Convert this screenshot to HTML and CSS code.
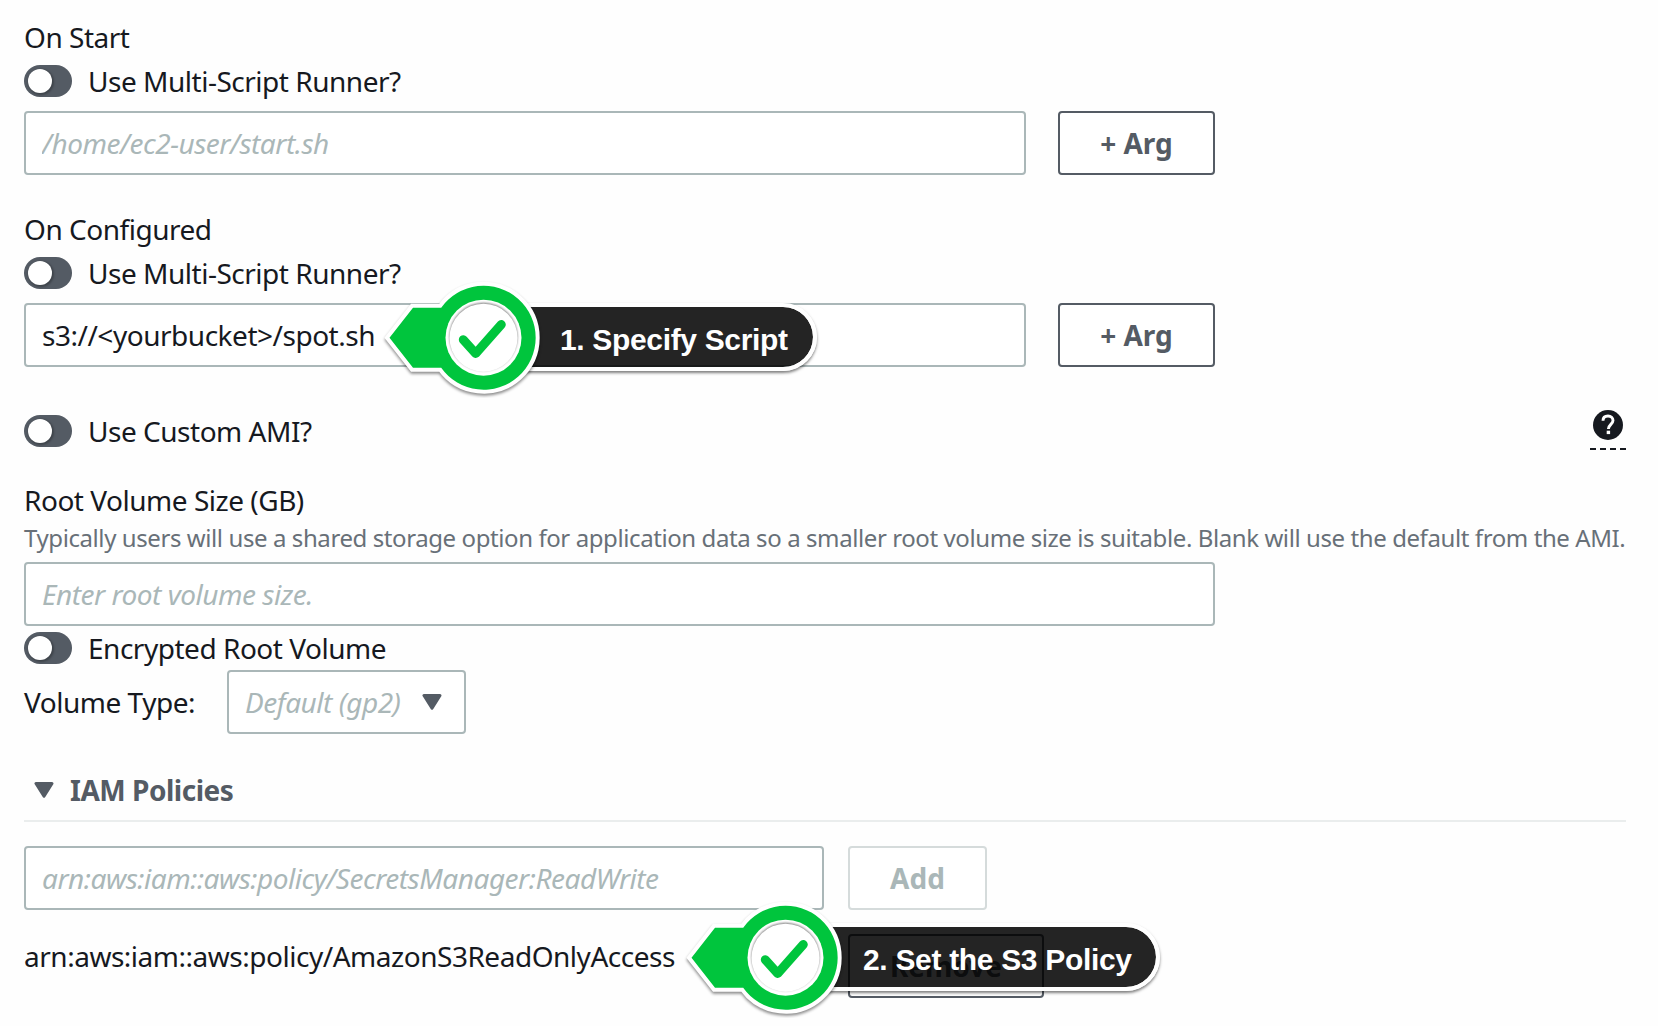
FILE: index.html
```html
<!DOCTYPE html>
<html lang="en">
<head>
<meta charset="utf-8">
<title>Cluster configuration</title>
<link rel="stylesheet" href="styles.css">
</head>
<body>
<main class="form">
  <section class="script">
    <div class="label">On Start</div>
    <label class="switch-row"><span class="switch"><span class="knob"></span></span>Use Multi-Script Runner?</label>
    <div class="script-fields">
      <input class="input" type="text" placeholder="/home/ec2-user/start.sh">
      <button class="button" type="button">+ Arg</button>
    </div>
  </section>

  <section class="script">
    <div class="label">On Configured</div>
    <label class="switch-row"><span class="switch"><span class="knob"></span></span>Use Multi-Script Runner?</label>
    <div class="script-fields">
      <input class="input" type="text" value="s3://&lt;yourbucket&gt;/spot.sh">
      <button class="button" type="button">+ Arg</button>
    </div>
  </section>

  <section class="ami">
    <label class="switch-row"><span class="switch"><span class="knob"></span></span>Use Custom AMI?</label>
    <svg class="help" width="36" height="44" viewBox="0 0 36 44">
      <circle cx="18" cy="17" r="15" fill="#16191f"/>
      <path d="M13 12.8C13 9.8 15 8 18 8s5 1.900 5 4.600c0 3.500-4.600 4.200-4.600 8.400" fill="none" stroke="#fff" stroke-width="2.900"/>
      <rect x="16.700" y="22.700" width="3.400" height="3.400" fill="#fff"/>
      <path d="M0 41H36" stroke="#16191f" stroke-width="2" stroke-dasharray="6 4"/>
    </svg>
  </section>

  <section class="volume">
    <div class="label label-tight">Root Volume Size (GB)</div>
    <div class="hint">Typically users will use a shared storage option for application data so a smaller root volume size is suitable. Blank will use the default from the AMI.</div>
    <input class="input volume-size" type="text" placeholder="Enter root volume size.">
    <label class="switch-row"><span class="switch"><span class="knob"></span></span>Encrypted Root Volume</label>
    <div class="volume-type">
      <span>Volume Type:</span>
      <div class="select">
        <span>Default (gp2)</span>
        <svg class="caret" width="20" height="16" viewBox="0 0 20 16"><path d="M2 1.500H18L10 14.300Z"/></svg>
      </div>
    </div>
  </section>

  <section class="policies">
    <h2 class="policies-title">
      <svg class="caret" width="20" height="16" viewBox="0 0 20 16"><path d="M2 1.500H18L10 14.300Z"/></svg>
      <span>IAM Policies</span>
    </h2>
    <div class="policy-row">
      <input class="input" type="text" placeholder="arn:aws:iam::aws:policy/SecretsManager:ReadWrite">
      <button class="button button-add" type="button" disabled>Add</button>
    </div>
    <div class="policy-row">
      <div class="policy-name">arn:aws:iam::aws:policy/AmazonS3ReadOnlyAccess</div>
      <button class="button button-remove" type="button">Remove</button>
    </div>
  </section>
</main>

<div class="callout callout-script">
  <div class="pill"></div>
  <svg class="marker" width="440" height="120" viewBox="0 0 440 120">
    <g class="badge">
      <path d="M9.500 59.700L33 29.700H61.200A52 52 0 1 1 61.200 89.700H33Z"/>
    </g>
    <circle cx="103.500" cy="59.700" r="38" fill="#fff"/>
    <circle class="rim" cx="103.500" cy="59.700" r="34"/>
    <path class="check" d="M83.300 61.700L95.700 75.500L121.300 46.500"/>
    <text class="callout-text" x="180" y="72" textLength="228">1. Specify Script</text>
  </svg>
</div>

<div class="callout callout-policy">
  <div class="pill"></div>
  <svg class="marker" width="490" height="120" viewBox="0 0 490 120">
    <g class="badge">
      <path d="M9.500 59.700L33 29.700H61.200A52 52 0 1 1 61.200 89.700H33Z"/>
    </g>
    <circle cx="103.500" cy="59.700" r="38" fill="#fff"/>
    <circle class="rim" cx="103.500" cy="59.700" r="34"/>
    <path class="check" d="M83.300 61.700L95.700 75.500L121.300 46.500"/>
    <text class="callout-text" x="181" y="72" textLength="269">2. Set the S3 Policy</text>
  </svg>
</div>
</body>
</html>
```
FILE: styles.css
```css
* {
  box-sizing: border-box;
}

body {
  margin: 0;
  background: #fefefe;
  color: #16191f;
  font: 28px/44px "Noto Sans", sans-serif;
  letter-spacing: -.48px;
}

.form {
  width: 1626px;
  padding: 15px 0 0 24px;
}

.script {
  margin-bottom: 32px;
}

.label-tight {
  line-height: 40px;
}

.switch-row {
  display: flex;
  align-items: center;
  gap: 16px;
  height: 44px;
}

.switch {
  width: 48px;
  height: 32px;
  padding: 4px;
  border-radius: 16px;
  background: #545b64;
}

.knob {
  display: block;
  width: 24px;
  height: 24px;
  border-radius: 50%;
  background: #fff;
  box-shadow: 1px 1px 2px 1px rgba(0, 0, 0, .25);
}

.input {
  display: block;
  height: 64px;
  padding: 0 16px;
  border: 2px solid #aab7b8;
  border-radius: 4px;
  background: #fff;
  color: #16191f;
  font: inherit;
  letter-spacing: inherit;
}

.input::placeholder {
  color: #aab7b8;
  font-style: italic;
  opacity: 1;
}

.button {
  height: 64px;
  padding: 0;
  border: 2px solid #545b64;
  border-radius: 4px;
  background: #fff;
  color: #545b64;
  font: bold 28px/44px "Noto Sans", sans-serif;
}

.script-fields {
  display: grid;
  grid-template-columns: 1002px 157px;
  gap: 32px;
  margin-top: 8px;
}

.ami {
  display: flex;
  justify-content: space-between;
  margin: 42px 0 27px;
}

.help {
  margin-top: -1px;
}

.hint {
  color: #687078;
  font-size: 24px;
  line-height: 36px;
  letter-spacing: -.41px;
  white-space: nowrap;
}

.volume-size {
  width: 1191px;
  margin-top: 6px;
}

.volume-type {
  display: flex;
  align-items: center;
  gap: 32px;
}

.select {
  display: flex;
  align-items: center;
  justify-content: space-between;
  width: 239px;
  height: 64px;
  padding: 0 22px 0 16px;
  border: 2px solid #aab7b8;
  border-radius: 4px;
  background: #fff;
  color: #aab7b8;
  font-style: italic;
}

.caret {
  fill: #545b64;
  stroke: #545b64;
  stroke-width: 3;
  stroke-linejoin: round;
}

.policies {
  margin-top: 34px;
}

.policies-title {
  display: flex;
  align-items: center;
  gap: 16px;
  margin: 0;
  padding: 0 0 8px 10px;
  border-bottom: 2px solid #eaeded;
  color: #545b64;
  font-size: 28px;
}

.policy-row {
  display: grid;
  grid-template-columns: 800px max-content;
  gap: 24px;
  margin-top: 24px;
}

.button-add {
  width: 139px;
  border-color: #d5dbdb;
  color: #aab7b8;
}

.button-remove {
  width: 196px;
}

/* Annotations laid over the form */
.callout {
  position: absolute;
  letter-spacing: 0;
}

.callout-script {
  left: 380px;
  top: 278px;
  width: 437px;
}

.callout-policy {
  left: 681.5px;
  top: 897.5px;
  width: 478.5px;
}

.pill {
  height: 68px;
  margin: 25.500px 0 0 140px;
  border: 4px solid #fff;
  border-radius: 0 34px 34px 0;
  background: rgba(0, 0, 0, .86);
  background-clip: padding-box;
  box-shadow: 0 2px 3px rgba(0, 0, 0, .5);
}

.callout-script .pill {
  margin-top: 25px;
}

.marker {
  position: absolute;
  left: 0;
  top: 0;
}

.badge {
  fill: #00c53d;
  stroke: #fff;
  stroke-width: 8;
  paint-order: stroke;
  filter: drop-shadow(0 2px 1.500px rgba(0, 0, 0, .45));
}

.rim {
  fill: #fff;
  filter: drop-shadow(0 -1px .8px rgba(0, 0, 0, .5));
}

.check {
  fill: none;
  stroke: #00c53d;
  stroke-width: 9;
  stroke-linecap: round;
  stroke-linejoin: round;
}

.callout-text {
  fill: #fff;
  font: bold 30px "Liberation Sans", Arial, sans-serif;
}
```
